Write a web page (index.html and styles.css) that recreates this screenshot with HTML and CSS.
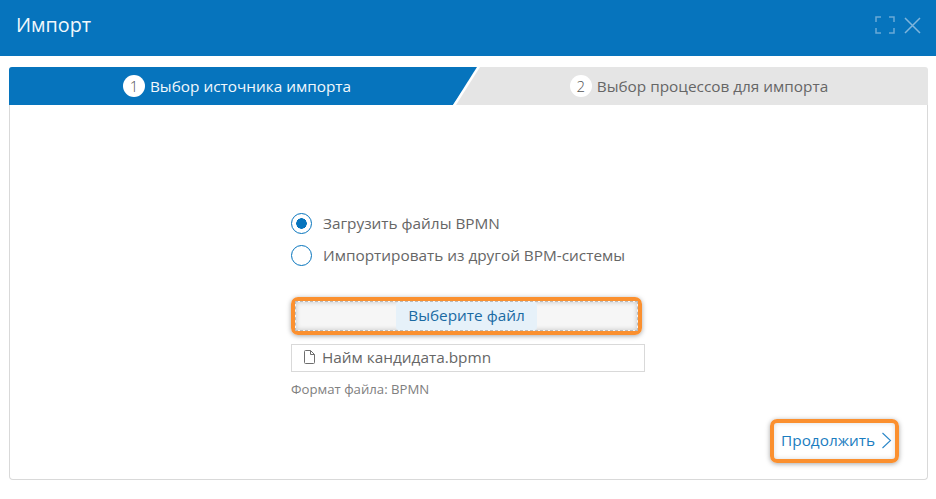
FILE: index.html
```
<!DOCTYPE html>
<html lang="ru">
<head>
<meta charset="utf-8">
<title>Импорт</title>
<link rel="stylesheet" href="styles.css">
</head>
<body>
<header class="head">
  <h1 class="title">Импорт</h1>
  <div class="head-icons">
    <svg class="ic" width="20" height="18" viewBox="0 0 20 18"><path d="M6 1H1v5M14 1h5v5M1 12v5h5M19 12v5h-5" fill="none" stroke="#6aa9d6" stroke-width="1.5"/></svg>
    <svg class="ic" width="17" height="17" viewBox="0 0 17 17"><path d="M1 1l15 15M16 1L1 16" fill="none" stroke="#7fb5dc" stroke-width="1.5"/></svg>
  </div>
</header>
<main class="wrap">
  <div class="tabs">
    <div class="tab tab-on"><span class="num">1</span><span>Выбор источника импорта</span></div>
    <div class="tab tab-off"><span class="num">2</span><span>Выбор процессов для импорта</span></div>
  </div>
  <section class="panel">
    <div class="form">
      <label class="radio-row"><span class="radio radio-on"></span>Загрузить файлы BPMN</label>
      <label class="radio-row"><span class="radio"></span>Импортировать из другой BPM-системы</label>
      <div class="drop"><div class="drop-inner"><span class="drop-btn">Выберите файл</span></div></div>
      <div class="file">
        <svg width="13" height="16" viewBox="0 0 13 16"><path d="M1.5 2.500a1 1 0 0 1 1-1h5l4 4v8a1 1 0 0 1-1 1h-8a1 1 0 0 1-1-1zM7.500 1.500v4h4" fill="none" stroke="#6e6e6e" stroke-width="1"/></svg>
        <span>Найм кандидата.bpmn</span>
      </div>
      <div class="hint">Формат файла: BPMN</div>
    </div>
    <div class="actions">
      <a class="next">Продолжить<svg width="11" height="17" viewBox="0 0 11 17"><path d="M1.5 1l8 7.500-8 7.500" fill="none" stroke="#2a86c8" stroke-width="1.100"/></svg></a>
    </div>
  </section>
</main>
</body>
</html>
```
FILE: styles.css
```
* { box-sizing: border-box; }
html, body { margin: 0; height: 100%; }
body { background: #fff; font-family: "Open Sans", "Noto Sans", sans-serif; color: #666; overflow: hidden; }
.head { height: 56px; background: #0674bd; display: flex; align-items: center; justify-content: space-between; padding: 0 15px 6px 16px; }
.title { margin: 0; font-size: 19.800px; font-weight: 400; color: #f2f8fc; line-height: 50px; }
.head-icons { display: flex; align-items: center; gap: 9px; }
.ic { display: block; }
.wrap { padding: 11px 8px 0 9px; }
.tabs { display: flex; height: 38px; background: #e5e5e5; border-radius: 3px 3px 0 0; overflow: hidden; }
.tab { display: flex; align-items: center; justify-content: center; gap: 5px; font-size: 15.350px; height: 38px; }
.tab-on { width: 470px; color: #f2f8fc; background: #0674bd; clip-path: polygon(0 0, 100% 0, 444px 100%, 0 100%); padding-right: 14px; }
.tab-off { flex: 1; color: #666; padding-right: 5px; position: relative; margin-left: -4px; }
.tab-off::before { content: ""; position: absolute; left: -22px; top: 0; width: 30px; height: 38px; background: #fff; clip-path: polygon(24px 0, 27px 0, 3px 100%, 0 100%); }
.num { width: 22px; height: 22px; border-radius: 50%; background: #fff; color: #555; display: flex; align-items: center; justify-content: center; font-size: 15px; font-weight: 300; }
.panel { height: 375px; border: 1px solid #d9d9d9; border-top: 0; border-radius: 0 0 4px 4px; display: flex; flex-direction: column; }
.form { width: 354px; margin: 108px 0 0 281px; }
.radio-row { display: flex; align-items: center; gap: 11px; height: 20px; margin-bottom: 12px; font-size: 15.350px; color: #666; }
.radio { width: 21px; height: 21px; flex: none; border: 1.500px solid #0674bd; border-radius: 50%; background: #fff; }
.radio-on { background: radial-gradient(circle, #0674bd 0 5px, #fff 5.500px); }
.drop { width: 351px; height: 38px; margin-top: 32px; border: 4px solid #fb902f; border-radius: 7px; box-shadow: 0 1px 5px rgba(0,0,0,.35); }
.drop-inner { height: 100%; border: 1px dashed #bbb; background: #f6f6f6; box-shadow: inset 0 0 5px rgba(0,0,0,.2); display: flex; justify-content: center; align-items: center; }
.drop-btn { height: 28px; padding: 0 12px 2px; display: flex; align-items: center; background: #e6f1f9; color: #1a6aa3; font-size: 15.350px; border-radius: 3px; }
.file { height: 28px; margin-top: 9px; border: 1px solid #d9d9d9; display: flex; align-items: center; gap: 6px; padding: 0 0 2px 11px; font-size: 15.350px; color: #666; }
.file svg { display: block; }
.hint { margin-top: 9px; font-size: 13.200px; color: #808080; line-height: 16px; }
.actions { display: flex; justify-content: flex-end; margin-top: 22px; padding-right: 28px; }
.next { height: 44px; padding: 0 3px 2px 7px; display: flex; align-items: center; gap: 6px; border: 4px solid #fb902f; border-radius: 7px; box-shadow: 0 1px 5px rgba(0,0,0,.35), inset 0 0 5px rgba(0,0,0,.15); color: #1b7dc0; font-size: 15.350px; }
```
